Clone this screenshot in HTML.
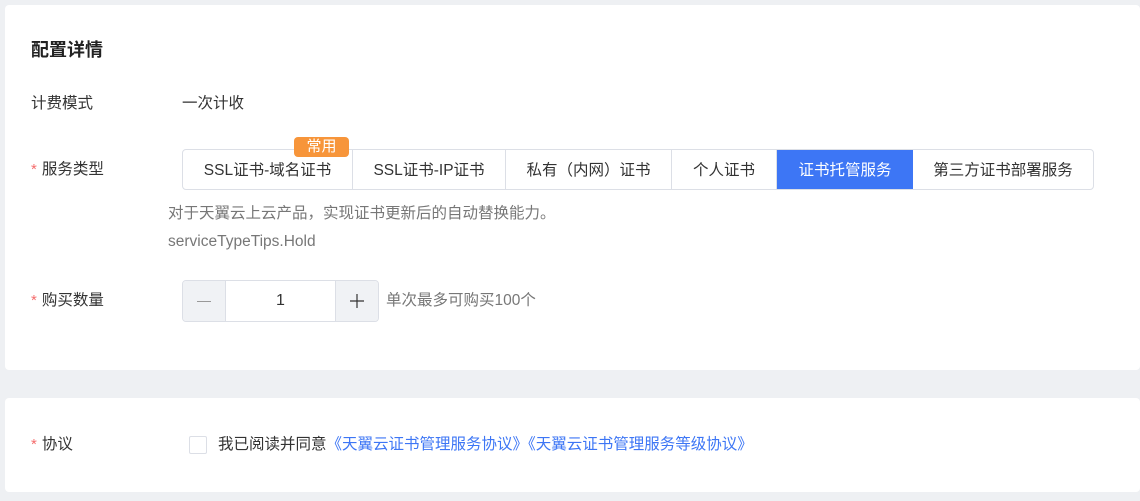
<!DOCTYPE html>
<html><head><meta charset="utf-8"><style>
*{box-sizing:border-box;margin:0;padding:0}
body{width:1140px;height:501px;background:#eef0f3;font-family:"Liberation Sans","Noto Sans CJK SC",sans-serif;position:relative;overflow:hidden;color:#333}
.card{position:absolute;left:5px;right:0;background:#fff;border-radius:4px}
.abs{position:absolute;white-space:nowrap}
.lbl{font-size:15.5px;color:#333}
.star{color:#f56c6c;margin-right:5px;font-size:15px}
.tabs{position:absolute;left:182px;top:149px;width:912px;height:41px;border:1px solid #dcdfe6;border-radius:4px;display:flex;font-size:15.5px;overflow:visible}
.tab{display:flex;align-items:center;justify-content:center;border-right:1px solid #dcdfe6;height:100%;color:#333;padding-bottom:2px}
.tab:last-child{border-right:none}
.act{background:#3d76f5;color:#fff;border-right:none}
.tip{font-size:15.5px;color:#777}
</style></head><body>
<div class="card" style="top:5px;height:365px">
  <div class="abs" style="left:26px;top:31px;font-size:18px;font-weight:bold;color:#222">配置详情</div>
  <div class="abs lbl" style="left:26px;top:86px">计费模式</div>
  <div class="abs lbl" style="left:177px;top:86px">一次计收</div>
  <div class="abs lbl" style="left:26px;top:152px"><span class="star">*</span>服务类型</div>
  <div class="abs tip" style="left:163px;top:196px">对于天翼云上云产品，实现证书更新后的自动替换能力。</div>
  <div class="abs tip" style="left:163px;top:228px">serviceTypeTips.Hold</div>
  <div class="abs lbl" style="left:26px;top:283px"><span class="star">*</span>购买数量</div>
  <div class="abs tip" style="left:381px;top:283px">单次最多可购买100个</div>
</div>
<div class="tabs">
  <div class="tab" style="width:170px">SSL证书-域名证书</div>
  <div class="tab" style="width:153px">SSL证书-IP证书</div>
  <div class="tab" style="width:166px">私有（内网）证书</div>
  <div class="tab" style="width:105px">个人证书</div>
  <div class="tab act" style="width:136px">证书托管服务</div>
  <div class="tab" style="flex:1">第三方证书部署服务</div>
</div>
<div class="abs" style="left:294px;top:137px;width:55px;height:20px;background:#f7953a;color:#fff;border-radius:4px;font-size:15px;text-align:center;line-height:19px">常用</div>
<div class="abs" style="left:182px;top:280px;width:197px;height:42px;border:1px solid #dcdfe6;border-radius:4px;display:flex;overflow:hidden">
  <div style="width:43px;background:#f0f2f5;border-right:1px solid #dcdfe6;display:flex;align-items:center;justify-content:center"><div style="width:14px;height:1px;background:#999"></div></div>
  <div style="flex:1;display:flex;align-items:center;justify-content:center;font-size:16px">1</div>
  <div style="width:43px;background:#f0f2f5;border-left:1px solid #dcdfe6;display:flex;align-items:center;justify-content:center"><svg width="14" height="14"><path d="M7 0V14M0 7H14" stroke="#333" stroke-width="1.2"/></svg></div>
</div>
<div class="card" style="top:398px;height:94px">
  <div class="abs lbl" style="left:26px;top:34px"><span class="star">*</span>协议</div>
  <div class="abs" style="left:184px;top:38px;width:18px;height:18px;border:1px solid #dcdfe6;border-radius:2px"></div>
  <div class="abs lbl" style="left:213px;top:34px">我已阅读并同意<span style="color:#3d76f5">《天翼云证书管理服务协议》《天翼云证书管理服务等级协议》</span></div>
</div>
</body></html>
